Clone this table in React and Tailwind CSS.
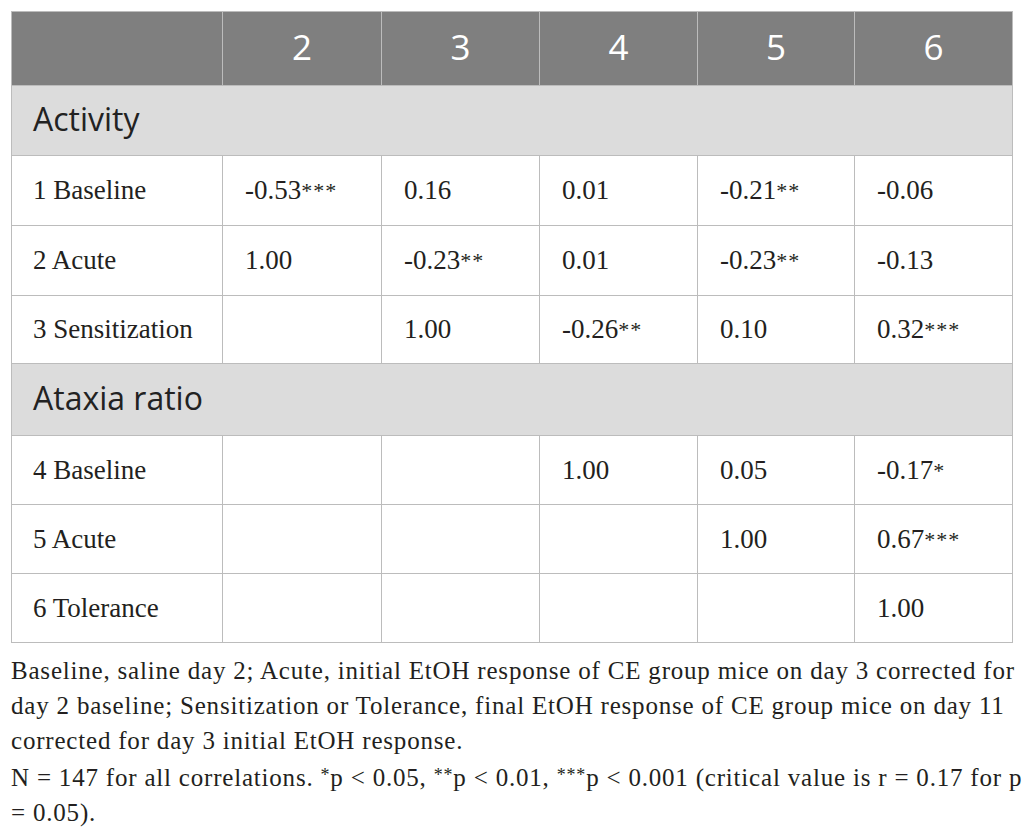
import React from "react";

const serif = { fontFamily: '"Liberation Serif", "Times New Roman", serif' };
const sans = { fontFamily: '"Open Sans", "Noto Sans", sans-serif' };

const rows = [
  { section: "Activity" },
  { label: "1 Baseline", cells: [["-0.53", "***"], ["0.16"], ["0.01"], ["-0.21", "**"], ["-0.06"]], h: "h-[69px]" },
  { label: "2 Acute", cells: [["1.00"], ["-0.23", "**"], ["0.01"], ["-0.23", "**"], ["-0.13"]], h: "h-[69px]" },
  { label: "3 Sensitization", cells: [[""], ["1.00"], ["-0.26", "**"], ["0.10"], ["0.32", "***"]], h: "h-[67px]" },
  { section: "Ataxia ratio" },
  { label: "4 Baseline", cells: [[""], [""], ["1.00"], ["0.05"], ["-0.17", "*"]], h: "h-[68px]" },
  { label: "5 Acute", cells: [[""], [""], [""], ["1.00"], ["0.67", "***"]], h: "h-[68px]" },
  { label: "6 Tolerance", cells: [[""], [""], [""], [""], ["1.00"]], h: "h-[68px]" },
];

function Stars({ children }) {
  return <span className="text-[22px] align-[3px] tracking-[1px]">{children}</span>;
}

export default function App() {
  return (
    <div className="w-[1026px] h-[835px] bg-white text-[#231f20] overflow-hidden">
      <div className="pt-[11px] pl-[11px]">
        <div className="w-[1002px] grid grid-cols-[210px_158px_157px_157px_156px_157px] gap-px bg-[#bcbcbc] border border-[#bcbcbc]">
          {/* header */}
          <div className="h-[73px] bg-[#7f7f7f]" />
          {["2", "3", "4", "5", "6"].map((n) => (
            <div
              key={n}
              className="h-[73px] bg-[#7f7f7f] flex items-center justify-center text-white text-[35px] pb-[2px]"
              style={sans}
            >
              {n}
            </div>
          ))}

          {rows.map((r, i) =>
            r.section ? (
              <div
                key={i}
                className={`col-span-6 bg-[#dcdcdc] flex items-center pl-[21px] text-[32px] text-[#222] pb-[3px] ${i === 0 ? "h-[69px]" : "h-[71px]"}`}
                style={sans}
              >
                {r.section}
              </div>
            ) : (
              <React.Fragment key={i}>
                <div className={`${r.h} bg-white flex items-center pl-[21px] text-[27px]`} style={serif}>
                  {r.label}
                </div>
                {r.cells.map(([v, s], j) => (
                  <div key={j} className={`${r.h} bg-white flex items-center pl-[22px] text-[27px]`} style={serif}>
                    {v}
                    {s && <Stars>{s}</Stars>}
                  </div>
                ))}
              </React.Fragment>
            )
          )}
        </div>

        <div className="mt-[10px] text-[25px] tracking-[0.8px] leading-[35px] text-[#231f20] whitespace-nowrap" style={serif}>
          Baseline, saline day 2; Acute, initial EtOH response of CE group mice on day 3 corrected for
          <br />
          day 2 baseline; Sensitization or Tolerance, final EtOH response of CE group mice on day 11
          <br />
          corrected for day 3 initial EtOH response.
          <br />
          N = 147 for all correlations. <span className="text-[18px] align-[5px]">*</span>p &lt; 0.05,{" "}
          <span className="text-[18px] align-[5px]">**</span>p &lt; 0.01,{" "}
          <span className="text-[18px] align-[5px]">***</span>p &lt; 0.001 (critical value is r = 0.17 for p
          <br />= 0.05).
        </div>
      </div>
    </div>
  );
}
